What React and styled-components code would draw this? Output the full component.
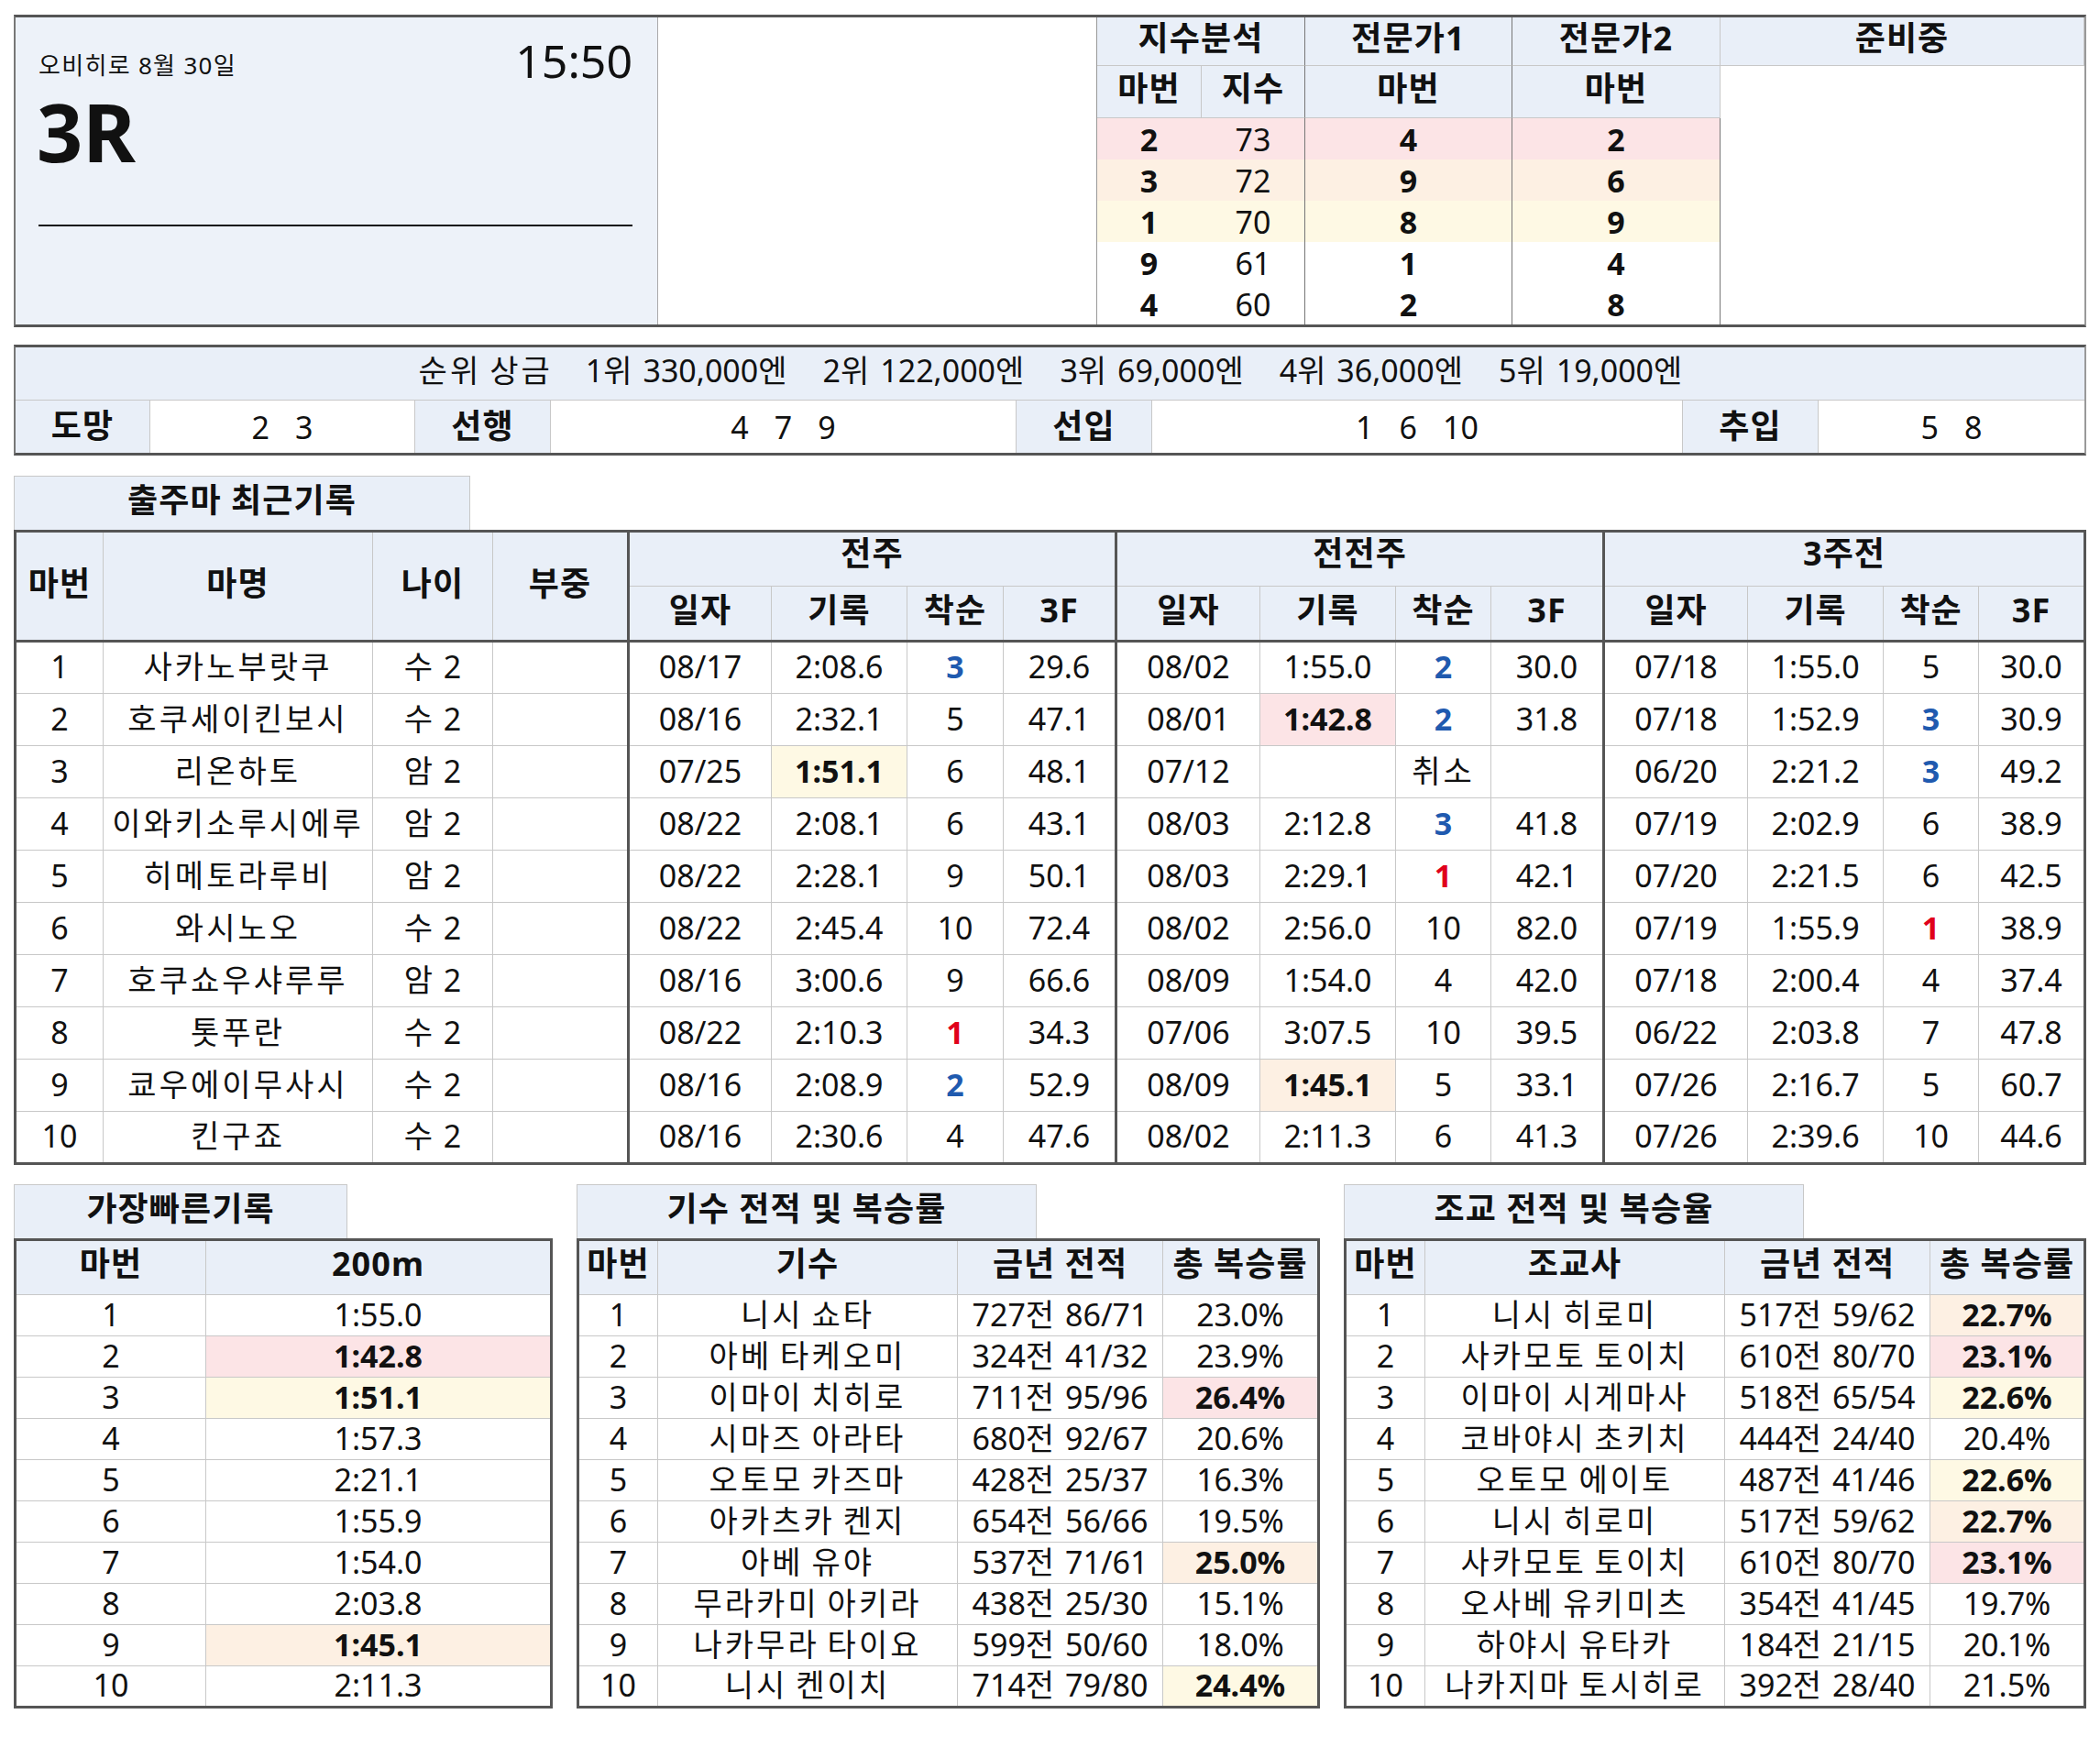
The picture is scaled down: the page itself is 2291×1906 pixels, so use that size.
import React from 'react';
import styled, { createGlobalStyle } from 'styled-components';

const HEAD = '#E9EFF8';
const PANEL = '#EDF2F9';
const PINK = '#FCE4E6';
const PEACH = '#FDF0E3';
const YELLOW = '#FEF9E4';
const BLUE = '#1F5AAF';
const RED = '#E0001B';
const DARK = '#555';
const LINE = '#C8C8C8';

// Hangul in Noto Sans CJK sets narrower than in the original font,
// so runs of Hangul get a little extra tracking.
const HANGUL = /([\uAC00-\uD7A3\u3131-\u318E]+)/;

const Ko = styled.span`
    letter-spacing: 0.09em;
`;

const ko = (text) =>
    String(text)
        .split(HANGUL)
        .map((part, i) => (i % 2 ? <Ko key={i}>{part}</Ko> : part));

const GlobalStyle = createGlobalStyle`
    * {
        box-sizing: border-box;
    }
    body {
        margin: 0;
        background: #fff;
        color: #111;
        font-family: "Noto Sans", "Noto Sans CJK KR", sans-serif;
    }
`;

const Page = styled.div`
    width: 2261px;
    margin: 16px 0 40px 15px;
    display: flex;
    flex-direction: column;
`;

// ---- top block -------------------------------------------------------

const TopBlock = styled.div`
    display: grid;
    grid-template-columns: 701px 479px 114px 113px 226px 227px 1fr;
    grid-template-rows: 53px 57px repeat(5, 45px);
    border-top: 3px solid ${DARK};
    border-bottom: 3px solid ${DARK};
    border-left: 2px solid #777;
    border-right: 2px solid #999;
`;

const RacePanel = styled.div`
    grid-row: 1 / -1;
    background: ${PANEL};
    border-right: 1px solid #aaa;
    padding: 22px 27px 0 25px;
    display: flex;
    flex-direction: column;
`;

const RaceMeta = styled.div`
    display: flex;
    justify-content: space-between;
    align-items: flex-start;
`;

const Venue = styled.span`
    font-size: 26px;
    line-height: 1;
    letter-spacing: 0.05em;
    margin-top: 17px;
`;

const StartTime = styled.span`
    font-size: 50px;
    line-height: 1;
`;

const RaceNo = styled.div`
    font-size: 88px;
    font-weight: 700;
    line-height: 1;
    margin-top: 8px;
    margin-left: -2px;
`;

const Rule = styled.div`
    height: 2px;
    background: #111;
    margin-top: 58px;
`;

const Blank = styled.div`
    grid-row: 1 / -1;
    background: #fff;
    border-right: 1px solid #999;
`;

const IdxHead = styled.div`
    grid-column: span ${(p) => p.$span || 1};
    background: ${HEAD};
    border-bottom: 1px solid ${LINE};
    border-right: 1px solid ${(p) => (p.$dark ? '#777' : LINE)};
    display: flex;
    align-items: center;
    justify-content: center;
    padding-bottom: 7px;
    font-size: 36px;
    font-weight: 700;
    line-height: 1;
    letter-spacing: 0.03em;
`;

const IdxCell = styled.div`
    background: ${(p) => p.$bg || '#fff'};
    border-right: 1px solid ${(p) => (p.$dark ? '#777' : 'transparent')};
    display: flex;
    align-items: center;
    justify-content: center;
    font-size: 34px;
    font-weight: ${(p) => (p.$bold ? 700 : 400)};
    line-height: 1;
`;

const ReadyBody = styled.div`
    grid-column: 7;
    grid-row: 2 / -1;
    background: #fff;
`;

// ---- prize block -----------------------------------------------------

const PrizeBox = styled.div`
    margin-top: 19px;
    border-top: 3px solid ${DARK};
    border-bottom: 3px solid ${DARK};
    border-left: 2px solid #777;
    border-right: 2px solid #999;
`;

const PrizeLine = styled.div`
    height: 58px;
    background: ${HEAD};
    border-bottom: 1px solid ${LINE};
    display: flex;
    align-items: center;
    justify-content: center;
    gap: 36px;
    padding: 0 0 8px 4px;
    font-size: 34px;
    line-height: 1;
`;

const PaceRow = styled.div`
    display: grid;
    grid-template-columns: 147px 289px 148px 508px 148px 579px 148px 1fr;
    height: 57px;
`;

const PaceLabel = styled.div`
    background: ${HEAD};
    display: flex;
    align-items: center;
    justify-content: center;
    padding-bottom: 2px;
    font-size: 36px;
    font-weight: 700;
    line-height: 1;
    letter-spacing: 0.03em;
    border-right: 1px solid ${LINE};
`;

const PaceValue = styled.div`
    display: flex;
    align-items: center;
    justify-content: center;
    gap: 28px;
    font-size: 34px;
    line-height: 1;
    border-right: 1px solid ${LINE};

    &:last-child {
        border-right: none;
    }
`;

// ---- record tables ---------------------------------------------------

const SectionTab = styled.div`
    width: ${(p) => p.$w}px;
    height: 59px;
    margin-top: ${(p) => p.$top || 0}px;
    background: ${HEAD};
    border: 1px solid ${LINE};
    border-bottom: none;
    display: flex;
    align-items: center;
    justify-content: center;
    padding-bottom: 6px;
    font-size: 36px;
    font-weight: 700;
    line-height: 1;
    letter-spacing: 0.03em;
`;

const Table = styled.table`
    width: ${(p) => p.$w || 2261}px;
    table-layout: fixed;
    border-collapse: collapse;
    border: 3px solid ${DARK};
    font-size: 34px;
    line-height: 1;
`;

const Th = styled.th`
    height: ${(p) => p.$h || 60}px;
    padding: 0 0 ${(p) => p.$pb || 6}px;
    background: ${HEAD};
    border: 1px solid ${LINE};
    border-left: ${(p) => (p.$group ? `3px solid ${DARK}` : `1px solid ${LINE}`)};
    font-size: 36px;
    font-weight: 700;
    letter-spacing: 0.03em;
    text-align: center;
    vertical-align: middle;
    white-space: nowrap;
`;

const Td = styled.td`
    height: ${(p) => p.$h || 57}px;
    padding: 0 0 3px;
    background: ${(p) => p.$bg || '#fff'};
    border: 1px solid ${LINE};
    border-left: ${(p) => (p.$group ? `3px solid ${DARK}` : `1px solid ${LINE}`)};
    color: ${(p) => p.$color || '#111'};
    font-weight: ${(p) => (p.$bold ? 700 : 400)};
    text-align: center;
    vertical-align: middle;
    white-space: nowrap;
`;

const Body = styled.tbody`
    tr:first-child td {
        border-top: 3px solid ${DARK};
    }
`;

const BottomRow = styled.div`
    display: flex;
    gap: 26px;
    align-items: flex-start;
    margin-top: 21px;
`;

const MiniSection = styled.section`
    width: ${(p) => p.$w}px;
    display: flex;
    flex-direction: column;
`;

// ---- data ------------------------------------------------------------

const index = [
    ['2', '73', '4', '2', PINK],
    ['3', '72', '9', '6', PEACH],
    ['1', '70', '8', '9', YELLOW],
    ['9', '61', '1', '4', null],
    ['4', '60', '2', '8', null],
];

const prizes = ['순위 상금', '1위 330,000엔', '2위 122,000엔', '3위 69,000엔', '4위 36,000엔', '5위 19,000엔'];

const pace = [
    ['도망', ['2', '3']],
    ['선행', ['4', '7', '9']],
    ['선입', ['1', '6', '10']],
    ['추입', ['5', '8']],
];

// a run: [date, time, place, 3F, highlight]
const horses = [
    [1, '사카노부랏쿠', '수 2', ['08/17', '2:08.6', '3', '29.6'], ['08/02', '1:55.0', '2', '30.0'], ['07/18', '1:55.0', '5', '30.0']],
    [2, '호쿠세이킨보시', '수 2', ['08/16', '2:32.1', '5', '47.1'], ['08/01', '1:42.8', '2', '31.8', PINK], ['07/18', '1:52.9', '3', '30.9']],
    [3, '리온하토', '암 2', ['07/25', '1:51.1', '6', '48.1', YELLOW], ['07/12', '', '취소', ''], ['06/20', '2:21.2', '3', '49.2']],
    [4, '이와키소루시에루', '암 2', ['08/22', '2:08.1', '6', '43.1'], ['08/03', '2:12.8', '3', '41.8'], ['07/19', '2:02.9', '6', '38.9']],
    [5, '히메토라루비', '암 2', ['08/22', '2:28.1', '9', '50.1'], ['08/03', '2:29.1', '1', '42.1'], ['07/20', '2:21.5', '6', '42.5']],
    [6, '와시노오', '수 2', ['08/22', '2:45.4', '10', '72.4'], ['08/02', '2:56.0', '10', '82.0'], ['07/19', '1:55.9', '1', '38.9']],
    [7, '호쿠쇼우샤루루', '암 2', ['08/16', '3:00.6', '9', '66.6'], ['08/09', '1:54.0', '4', '42.0'], ['07/18', '2:00.4', '4', '37.4']],
    [8, '톳푸란', '수 2', ['08/22', '2:10.3', '1', '34.3'], ['07/06', '3:07.5', '10', '39.5'], ['06/22', '2:03.8', '7', '47.8']],
    [9, '쿄우에이무사시', '수 2', ['08/16', '2:08.9', '2', '52.9'], ['08/09', '1:45.1', '5', '33.1', PEACH], ['07/26', '2:16.7', '5', '60.7']],
    [10, '킨구죠', '수 2', ['08/16', '2:30.6', '4', '47.6'], ['08/02', '2:11.3', '6', '41.3'], ['07/26', '2:39.6', '10', '44.6']],
];

const fastest = [
    ['1:55.0'], ['1:42.8', PINK], ['1:51.1', YELLOW], ['1:57.3'], ['2:21.1'],
    ['1:55.9'], ['1:54.0'], ['2:03.8'], ['1:45.1', PEACH], ['2:11.3'],
];

const jockeys = [
    ['니시 쇼타', '727전 86/71', '23.0%'],
    ['아베 타케오미', '324전 41/32', '23.9%'],
    ['이마이 치히로', '711전 95/96', '26.4%', PINK],
    ['시마즈 아라타', '680전 92/67', '20.6%'],
    ['오토모 카즈마', '428전 25/37', '16.3%'],
    ['아카츠카 켄지', '654전 56/66', '19.5%'],
    ['아베 유야', '537전 71/61', '25.0%', PEACH],
    ['무라카미 아키라', '438전 25/30', '15.1%'],
    ['나카무라 타이요', '599전 50/60', '18.0%'],
    ['니시 켄이치', '714전 79/80', '24.4%', YELLOW],
];

const trainers = [
    ['니시 히로미', '517전 59/62', '22.7%', PEACH],
    ['사카모토 토이치', '610전 80/70', '23.1%', PINK],
    ['이마이 시게마사', '518전 65/54', '22.6%', YELLOW],
    ['코바야시 초키치', '444전 24/40', '20.4%'],
    ['오토모 에이토', '487전 41/46', '22.6%', YELLOW],
    ['니시 히로미', '517전 59/62', '22.7%', PEACH],
    ['사카모토 토이치', '610전 80/70', '23.1%', PINK],
    ['오사베 유키미츠', '354전 41/45', '19.7%'],
    ['하야시 유타카', '184전 21/15', '20.1%'],
    ['나카지마 토시히로', '392전 28/40', '21.5%'],
];

const placeColor = (p) => (p === '1' ? RED : p === '2' || p === '3' ? BLUE : undefined);

function RunCells({ run }) {
    const [date, time, place, f3, mark] = run;
    const color = placeColor(place);
    return (
        <>
            <Td $group>{date}</Td>
            <Td $bg={mark} $bold={!!mark}>{time}</Td>
            <Td $color={color} $bold={!!color}>{ko(place)}</Td>
            <Td>{f3}</Td>
        </>
    );
}

function RateTable({ title, person, rows, width }) {
    return (
        <MiniSection $w={width}>
            <SectionTab $w={502}>{title}</SectionTab>
            <Table $w={width}>
                <colgroup>
                    <col style={{ width: 87 }} />
                    <col style={{ width: 327 }} />
                    <col style={{ width: 224 }} />
                    <col />
                </colgroup>
                <thead>
                    <tr>
                        <Th $pb={8}>마번</Th>
                        <Th $pb={8}>{person}</Th>
                        <Th $pb={8}>금년 전적</Th>
                        <Th $pb={8}>총 복승률</Th>
                    </tr>
                </thead>
                <tbody>
                    {rows.map(([name, record, rate, mark], i) => (
                        <tr key={i}>
                            <Td $h={45}>{i + 1}</Td>
                            <Td $h={45}>{ko(name)}</Td>
                            <Td $h={45}>{ko(record)}</Td>
                            <Td $h={45} $bg={mark} $bold={!!mark}>{rate}</Td>
                        </tr>
                    ))}
                </tbody>
            </Table>
        </MiniSection>
    );
}

export default function App() {
    return (
        <>
            <GlobalStyle />
            <Page>
                <TopBlock>
                    <RacePanel>
                        <RaceMeta>
                            <Venue>오비히로 8월 30일</Venue>
                            <StartTime>15:50</StartTime>
                        </RaceMeta>
                        <RaceNo>3R</RaceNo>
                        <Rule />
                    </RacePanel>
                    <Blank />
                    <IdxHead $span={2} $dark>지수분석</IdxHead>
                    <IdxHead $dark>전문가1</IdxHead>
                    <IdxHead>전문가2</IdxHead>
                    <IdxHead>준비중</IdxHead>
                    <IdxHead>마번</IdxHead>
                    <IdxHead $dark>지수</IdxHead>
                    <IdxHead $dark>마번</IdxHead>
                    <IdxHead>마번</IdxHead>
                    <ReadyBody />
                    {index.map(([no, score, e1, e2, bg]) => (
                        <React.Fragment key={no}>
                            <IdxCell $bg={bg} $bold>{no}</IdxCell>
                            <IdxCell $bg={bg} $dark>{score}</IdxCell>
                            <IdxCell $bg={bg} $bold $dark>{e1}</IdxCell>
                            <IdxCell $bg={bg} $bold $dark>{e2}</IdxCell>
                        </React.Fragment>
                    ))}
                </TopBlock>

                <PrizeBox>
                    <PrizeLine>
                        {prizes.map((p) => (
                            <span key={p}>{ko(p)}</span>
                        ))}
                    </PrizeLine>
                    <PaceRow>
                        {pace.map(([label, nums]) => (
                            <React.Fragment key={label}>
                                <PaceLabel>{label}</PaceLabel>
                                <PaceValue>
                                    {nums.map((n) => (
                                        <span key={n}>{n}</span>
                                    ))}
                                </PaceValue>
                            </React.Fragment>
                        ))}
                    </PaceRow>
                </PrizeBox>

                <SectionTab $w={498} $top={22}>출주마 최근기록</SectionTab>
                <Table>
                    <colgroup>
                        {[96, 294, 131, 148, 156, 148, 105, 123, 157, 148, 104, 123, 157, 148, 104].map((w, i) => (
                            <col key={i} style={{ width: w }} />
                        ))}
                        <col />
                    </colgroup>
                    <thead>
                        <tr>
                            <Th rowSpan={2}>마번</Th>
                            <Th rowSpan={2}>마명</Th>
                            <Th rowSpan={2}>나이</Th>
                            <Th rowSpan={2}>부중</Th>
                            <Th colSpan={4} $group $pb={12}>전주</Th>
                            <Th colSpan={4} $group $pb={12}>전전주</Th>
                            <Th colSpan={4} $group $pb={12}>3주전</Th>
                        </tr>
                        <tr>
                            {[0, 1, 2].map((g) => (
                                <React.Fragment key={g}>
                                    <Th $group>일자</Th>
                                    <Th>기록</Th>
                                    <Th>착순</Th>
                                    <Th>3F</Th>
                                </React.Fragment>
                            ))}
                        </tr>
                    </thead>
                    <Body>
                        {horses.map(([no, name, age, r1, r2, r3]) => (
                            <tr key={no}>
                                <Td>{no}</Td>
                                <Td>{ko(name)}</Td>
                                <Td>{ko(age)}</Td>
                                <Td />
                                <RunCells run={r1} />
                                <RunCells run={r2} />
                                <RunCells run={r3} />
                            </tr>
                        ))}
                    </Body>
                </Table>

                <BottomRow>
                    <MiniSection $w={588}>
                        <SectionTab $w={364}>가장빠른기록</SectionTab>
                        <Table $w={588}>
                            <colgroup>
                                <col style={{ width: 208 }} />
                                <col />
                            </colgroup>
                            <thead>
                                <tr>
                                    <Th $pb={8}>마번</Th>
                                    <Th $pb={8}>200m</Th>
                                </tr>
                            </thead>
                            <tbody>
                                {fastest.map(([time, mark], i) => (
                                    <tr key={i}>
                                        <Td $h={45}>{i + 1}</Td>
                                        <Td $h={45} $bg={mark} $bold={!!mark}>{time}</Td>
                                    </tr>
                                ))}
                            </tbody>
                        </Table>
                    </MiniSection>
                    <RateTable title="기수 전적 및 복승률" person="기수" rows={jockeys} width={811} />
                    <RateTable title="조교 전적 및 복승율" person="조교사" rows={trainers} width={810} />
                </BottomRow>
            </Page>
        </>
    );
}
